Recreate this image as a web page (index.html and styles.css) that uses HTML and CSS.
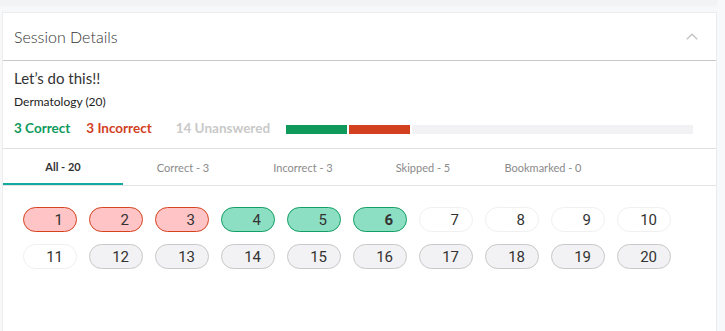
FILE: index.html
```html
<!DOCTYPE html>
<html>
<head>
<meta charset="utf-8">
<link rel="stylesheet" href="styles.css">
</head>
<body>
<div class="topstrip"></div>
<div class="card">
  <div class="card-header">
    <span class="card-title">Session Details</span>
    <svg class="chev" width="12" height="7" viewBox="0 0 12 7"><path d="M0.8 6.3 L6 1.3 L11.2 6.3" fill="none" stroke="#c4c4c4" stroke-width="1.4"/></svg>
  </div>
  <div class="summary">
    <div class="title">Let’s do this!!</div>
    <div class="subtitle">Dermatology (20)</div>
    <div class="stats">
      <span class="stat correct">3 Correct</span>
      <span class="stat incorrect">3 Incorrect</span>
      <span class="stat unanswered">14 Unanswered</span>
      <div class="bar">
        <div class="seg seg-green" style="width:61px"></div>
        <div class="seg seg-red" style="width:61px"></div>
        <div class="seg seg-gray"></div>
      </div>
    </div>
  </div>
  <div class="tabs">
    <div class="tab active">All - 20</div>
    <div class="tab">Correct - 3</div>
    <div class="tab">Incorrect - 3</div>
    <div class="tab">Skipped - 5</div>
    <div class="tab">Bookmarked - 0</div>
  </div>
  <div class="pills">
    <div class="pill wrong">1</div>
    <div class="pill wrong">2</div>
    <div class="pill wrong">3</div>
    <div class="pill right">4</div>
    <div class="pill right">5</div>
    <div class="pill right current">6</div>
    <div class="pill blank">7</div>
    <div class="pill blank">8</div>
    <div class="pill blank">9</div>
    <div class="pill blank">10</div>
    <div class="pill blank">11</div>
    <div class="pill skip">12</div>
    <div class="pill skip">13</div>
    <div class="pill skip">14</div>
    <div class="pill skip">15</div>
    <div class="pill skip">16</div>
    <div class="pill skip">17</div>
    <div class="pill skip">18</div>
    <div class="pill skip">19</div>
    <div class="pill skip">20</div>
  </div>
</div>
</body>
</html>
```
FILE: styles.css
```css
* { box-sizing: border-box; }
html, body { margin: 0; padding: 0; }
body {
  background: #f7f8fa;
  font-family: Lato, "Liberation Sans", sans-serif;
  color: #333;
  width: 725px;
  height: 331px;
  overflow: hidden;
}
.topstrip {
  height: 4px;
  margin-right: 8px;
  background: #f2f3f5;
  box-shadow: 0 1px 3px rgba(0,0,0,0.04);
}
.card {
  margin: 8px 8px 0 2px;
  background: #fff;
  border: 1px solid #ececec;
  border-bottom: none;
  height: 319px;
}
.card-header {
  height: 48px;
  display: flex;
  align-items: center;
  justify-content: space-between;
  padding: 0 18px 0 11px;
  border-bottom: 1px solid #c9c9c9;
}
.card-title {
  font-size: 16px;
  font-weight: 300;
  color: #333;
}
.chev { display: block; margin-top: -1px; }
.summary {
  padding: 6px 11px 11px;
  border-bottom: 1px solid #e0e0e0;
}
.title {
  font-size: 15px;
  line-height: 22px;
  color: #333;
}
.subtitle {
  font-size: 12px;
  line-height: 16px;
  margin-top: 5px;
  color: #222;
}
.stats {
  display: flex;
  align-items: center;
  height: 18px;
  margin-top: 9px;
}
.stat {
  font-size: 13.5px;
  font-weight: 700;
}
.correct { color: #0f9a5c; margin-right: 16px; }
.incorrect { color: #d2401f; margin-right: 24px; }
.unanswered { color: #c9c9c9; margin-right: 16px; }
.bar {
  display: flex;
  width: 407px;
  height: 9px;
  gap: 2px;
  margin-top: 2px;
}
.seg { height: 100%; }
.seg-green { background: #0f9a5c; }
.seg-red { background: #d2401f; }
.seg-gray { background: #f2f2f4; flex: 1; }
.tabs {
  display: flex;
  height: 37px;
  border-bottom: 1px solid #e3e3e3;
}
.tab {
  width: 120px;
  display: flex;
  align-items: center;
  justify-content: center;
  font-size: 11px;
  color: #8a8a8a;
  padding-top: 1px;
}
.tab.active {
  color: #333;
  font-weight: 700;
  border-bottom: 2px solid #13aaa1;
}
.pills {
  display: flex;
  flex-wrap: wrap;
  gap: 12px 12px;
  padding: 21px 20px 0;
}
.pill {
  width: 54px;
  height: 25px;
  border-radius: 13px;
  border: 1px solid #c8c8c8;
  background: #f2f2f4;
  font-family: Roboto, "Liberation Sans", sans-serif;
  font-size: 15px;
  color: #333;
  display: flex;
  align-items: center;
  justify-content: flex-end;
  padding-right: 13px;
}
.pill.wrong { background: #ffc4c5; border-color: #d6431f; }
.pill.right { background: #8ddfc4; border-color: #139e63; }
.pill.current { font-weight: 700; }
.pill.blank { background: #fff; border-color: #f0f0f0; }
```
